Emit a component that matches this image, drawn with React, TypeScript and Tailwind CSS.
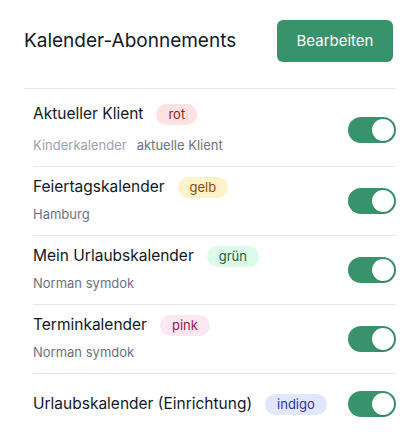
import React from 'react';

type Tone = 'red' | 'yellow' | 'green' | 'pink' | 'indigo';

interface Calendar {
  name: string;
  color: string;
  tone: Tone;
  sub?: string[];
}

const calendars: Calendar[] = [
  { name: 'Aktueller Klient', color: 'rot', tone: 'red', sub: ['Kinderkalender', 'aktuelle Klient'] },
  { name: 'Feiertagskalender', color: 'gelb', tone: 'yellow', sub: ['Hamburg'] },
  { name: 'Mein Urlaubskalender', color: 'grün', tone: 'green', sub: ['Norman symdok'] },
  { name: 'Terminkalender', color: 'pink', tone: 'pink', sub: ['Norman symdok'] },
  { name: 'Urlaubskalender (Einrichtung)', color: 'indigo', tone: 'indigo' },
];

const toneClasses: Record<Tone, string> = {
  red: 'bg-[#fde2e1] text-[#9b1c1c]',
  yellow: 'bg-[#fdf3c8] text-[#8d4a12]',
  green: 'bg-[#dcfce7] text-[#166534]',
  pink: 'bg-[#fce7f3] text-[#9d174d]',
  indigo: 'bg-[#e0e7ff] text-[#3730a3]',
};

function Toggle() {
  return (
    <button
      type="button"
      role="switch"
      aria-checked="true"
      className="flex h-[26px] w-12 shrink-0 items-center justify-end rounded-full bg-[#38936a] px-[2px]"
    >
      <span className="h-[22px] w-[22px] rounded-full bg-white shadow-sm" />
    </button>
  );
}

export default function App() {
  return (
    <div className="min-h-screen bg-white px-6 pt-5 font-['Inter',sans-serif] text-[#111827]">
      {/* Header */}
      <div className="flex items-center justify-between">
        <h2 className="text-[19px] font-normal">Kalender-Abonnements</h2>
        <button
          type="button"
          className="h-[42px] w-[116px] rounded-md bg-[#38936a] text-[15px] text-white"
        >
          Bearbeiten
        </button>
      </div>

      {/* List */}
      <div className="-mr-[3px] mt-[26px] border-t border-[#e5e7eb] pl-[9px] pt-[5px]">
        <ul className="divide-y divide-[#e5e7eb]">
          {calendars.map((cal, i) => (
            <li
              key={cal.name}
              className={`flex items-center justify-between ${
                cal.sub ? 'py-[10px]' : 'h-[60px]'
              }`}
            >
              <div>
                <div className="flex h-5 items-center">
                  <span className="text-[15.5px] leading-5">{cal.name}</span>
                  <span
                    className={`ml-[13px] rounded-full px-3 text-[13px] leading-[21px] ${toneClasses[cal.tone]}`}
                  >
                    {cal.color}
                  </span>
                </div>
                {cal.sub && (
                  <div
                    className={`flex gap-[10px] text-[13px] leading-[22px] text-[#6b7280] ${
                      i === 0 ? 'mt-[10px]' : 'mt-[6px]'
                    }`}
                  >
                    {cal.sub.map((s, j) => (
                      <span key={s} className={cal.sub!.length > 1 && j === 0 ? 'text-[#9ca3af]' : ''}>
                        {s}
                      </span>
                    ))}
                  </div>
                )}
              </div>
              <Toggle />
            </li>
          ))}
        </ul>
      </div>
    </div>
  );
}
